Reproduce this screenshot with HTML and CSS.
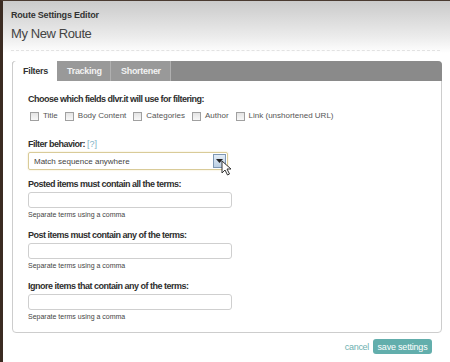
FILE: index.html
```html
<!DOCTYPE html>
<html lang="en">
<head>
<meta charset="UTF-8">
<meta name="viewport" content="width=device-width, initial-scale=1.0">
<title>Route Settings Editor</title>
<link rel="stylesheet" href="styles.css">
</head>
<body>

<div class="dialog">
    <div class="dialog-head">
        <div class="dialog-title">Route Settings Editor</div>
        <h1 class="route-name">My New Route</h1>
    </div>

    <div class="tabs">
        <ul class="tab-bar">
            <li class="tab active">Filters</li>
            <li class="tab tab-tracking">Tracking</li>
            <li class="tab tab-shortener">Shortener</li>
        </ul>
        <div class="tab-body">
            <div class="label">Choose which fields dlvr.it will use for filtering:</div>
            <div class="checks">
                <label><span class="box"></span>Title</label>
                <label><span class="box"></span>Body Content</label>
                <label><span class="box"></span>Categories</label>
                <label><span class="box"></span>Author</label>
                <label><span class="box"></span>Link (unshortened URL)</label>
            </div>

            <div class="label label-filter">Filter behavior: <a class="help">[?]</a></div>
            <div class="select">
                <span>Match sequence anywhere</span>
                <span class="select-btn">
                    <svg width="7" height="4" viewBox="0 0 7 4"><path d="M0 0h7L3.5 4z" fill="#222"/></svg>
                </span>
                <svg class="cursor" width="11" height="16" viewBox="0 0 11 16"><path d="M1 1v12l3-3 2.5 5 2-1-2.5-5h4z" fill="#fff" stroke="#333" stroke-width="1"/></svg>
            </div>

            <div class="field">
                <div class="label">Posted items must contain all the terms:</div>
                <div class="input"></div>
                <div class="hint">Separate terms using a comma</div>
            </div>

            <div class="field">
                <div class="label">Post items must contain any of the terms:</div>
                <div class="input"></div>
                <div class="hint">Separate terms using a comma</div>
            </div>

            <div class="field">
                <div class="label">Ignore items that contain any of the terms:</div>
                <div class="input"></div>
                <div class="hint">Separate terms using a comma</div>
            </div>
        </div>
    </div>

    <div class="actions">
        <a class="cancel">cancel</a>
        <button class="save">save settings</button>
    </div>
</div>

</body>
</html>
```

FILE: styles.css
```css
/* Route settings dialog */
body {
    margin: 0;
    font-family: "Liberation Sans", Arial, sans-serif;
    color: #333;
    background-color: #fff;
}

.dialog {
    width: 447px;
    height: 361px;
    border-left: 3px solid #3b2b22;
    border-top: 1px solid #4a3a30;
    background: linear-gradient(#cacaca 0, #ececec 36px, #fff 52px);
}

.dialog-head {
    margin: 0 10px 0 8px;
    padding: 9px 0 8px;
    border-bottom: 1px dashed #e2e2e2;
}

.dialog-title {
    font-size: 9px;
    line-height: 10px;
    font-weight: bold;
    letter-spacing: -0.2px;
    color: #333;
}

.route-name {
    margin: 6px 0 0;
    font-size: 13px;
    line-height: 16px;
    font-weight: normal;
    letter-spacing: -0.4px;
    color: #444;
}

.tabs {
    margin: 10px 8px 0 9px;
    border: 1px solid #cdcdcd;
    border-radius: 4px;
    height: 270px;
}

.tab-bar {
    display: flex;
    margin: -1px -1px 0;
    padding: 0;
    list-style: none;
    background-color: #8a8a8a;
    border-radius: 4px 4px 0 0;
    height: 20px;
}

.tab {
    width: 44px;
    padding-left: 10px;
    box-sizing: border-box;
    line-height: 20px;
    font-size: 9px;
    font-weight: bold;
    letter-spacing: -0.3px;
    color: #f2f2f2;
    background-color: #999;
    border-right: 1px solid #b0b0b0;
}

.tab-tracking {
    width: 54px;
}

.tab-shortener {
    width: 60px;
}

.tab.active {
    color: #333;
    background-color: #fff;
    border-right: none;
    border-left: 1px solid #cdcdcd;
    border-radius: 4px 0 0 0;
    width: 45px;
}

.tab-body {
    padding: 12px 15px 0;
}

.label {
    font-size: 9px;
    line-height: 12px;
    font-weight: bold;
    letter-spacing: -0.5px;
    color: #2e2e2e;
}

.label-filter {
    margin-top: 16px;
}

.help {
    font-weight: normal;
    letter-spacing: 0;
    color: #7fb3c6;
}

.checks {
    display: flex;
    gap: 7px;
    margin-top: 5px;
    padding-left: 2px;
    font-size: 8px;
    line-height: 12px;
    color: #555;
}

.checks label {
    display: flex;
    align-items: center;
    gap: 4px;
}

.box {
    width: 7px;
    height: 7px;
    border: 1px solid #a0a0a0;
    background: linear-gradient(#e4e4e4, #f8f8f8);
}

.select {
    position: relative;
    display: flex;
    align-items: center;
    justify-content: space-between;
    width: 200px;
    height: 18px;
    box-sizing: border-box;
    padding: 0 1px 0 5px;
    margin-top: 2px;
    border: 1px solid #d9cb98;
    border-radius: 2px;
    box-shadow: 0 0 2px #efe3bb;
    font-size: 8px;
    color: #444;
}

.select-btn {
    display: flex;
    align-items: center;
    justify-content: center;
    width: 11px;
    height: 12px;
    border: 1px solid #7d97b3;
    background: linear-gradient(#e2ecf6, #bccfe3);
}

.cursor {
    position: absolute;
    right: -5px;
    top: 7px;
}

.field {
    margin-top: 8px;
}

.field + .field {
    margin-top: 10px;
}

.field .input {
    margin-top: 2px;
}

.input {
    width: 204px;
    height: 16px;
    box-sizing: border-box;
    border: 1px solid #cfcfcf;
    border-radius: 3px;
    background-color: #fff;
}

.hint {
    margin-top: 2px;
    font-size: 7px;
    line-height: 9px;
    color: #444;
}

.actions {
    display: flex;
    justify-content: flex-end;
    align-items: center;
    gap: 4px;
    margin: 6px 18px 0 0;
}

.cancel {
    font-size: 9px;
    letter-spacing: -0.3px;
    color: #6db0b0;
}

.save {
    width: 59px;
    height: 15px;
    padding: 0;
    font-family: "Liberation Sans", Arial, sans-serif;
    font-size: 9px;
    letter-spacing: -0.2px;
    color: #fff;
    background-color: #62aeac;
    border: none;
    border-radius: 3px;
}
```
